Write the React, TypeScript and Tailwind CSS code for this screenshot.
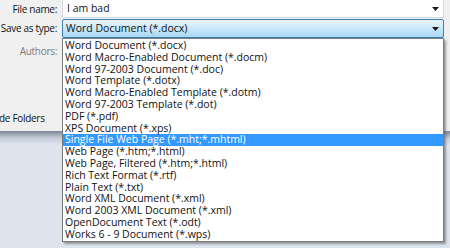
const fileTypes = [
  'Word Document (*.docx)',
  'Word Macro-Enabled Document (*.docm)',
  'Word 97-2003 Document (*.doc)',
  'Word Template (*.dotx)',
  'Word Macro-Enabled Template (*.dotm)',
  'Word 97-2003 Template (*.dot)',
  'PDF (*.pdf)',
  'XPS Document (*.xps)',
  'Single File Web Page (*.mht;*.mhtml)',
  'Web Page (*.htm;*.html)',
  'Web Page, Filtered (*.htm;*.html)',
  'Rich Text Format (*.rtf)',
  'Plain Text (*.txt)',
  'Word XML Document (*.xml)',
  'Word 2003 XML Document (*.xml)',
  'OpenDocument Text (*.odt)',
  'Works 6 - 9 Document (*.wps)',
];

const Arrow = () => (
  <svg width="7" height="4" viewBox="0 0 7 4" className="shrink-0">
    <path d="M0 0h7L3.5 4z" fill="#1a1a1a" />
  </svg>
);

const App = () => {
  return (
    <div className="relative w-[450px] h-[248px] overflow-hidden bg-[#f0f0f0] font-['Open_Sans',sans-serif] text-[10.5px] text-[#111]">
      {/* form rows */}
      <div className="flex flex-col">
        <div className="flex items-center h-[18px]">
          <div className="w-[57px] text-right whitespace-nowrap text-[10px] tracking-[-0.3px]">File name:</div>
          <div className="ml-[5px] w-[382px] h-[18px] bg-white border border-[#d5d9e0] border-t-0 flex items-center pl-[4px] pr-[4px]">
            <span className="flex-1">I am bad</span>
            <Arrow />
          </div>
        </div>
        <div className="flex items-center h-[19px] mt-[1px]">
          <div className="w-[57px] text-right whitespace-nowrap text-[10px] tracking-[-0.3px]">Save as type:</div>
          <div className="ml-[5px] w-[382px] h-[19px] border border-[#3c7fb1] rounded-[2px] bg-gradient-to-b from-[#eaf6fd] via-[#c9e8f9] to-[#a7d8f4] flex items-center pl-[3px] pr-[4px]">
            <span className="flex-1">Word Document (*.docx)</span>
            <Arrow />
          </div>
        </div>
        <div className="flex items-center h-[18px] mt-[4px]">
          <div className="w-[57px] text-right whitespace-nowrap text-[10px] tracking-[-0.3px] text-[#7a7a7a]">Authors:</div>
        </div>
        <div className="flex items-center h-[18px] mt-[49px] -ml-[1px] whitespace-nowrap text-[10px] tracking-[-0.3px]">
          <span>de Folders</span>
        </div>
      </div>

      {/* bottom panel */}
      <div className="absolute left-0 right-0 top-[131px] bottom-0 bg-[#dde4ee]">
        <div className="h-[14px] bg-gradient-to-b from-[#7d8594] via-[#c5cdd9] to-[#dde4ee]" />
      </div>

      {/* dropdown list */}
      <div className="absolute left-[62px] top-[38px] w-[382px] h-[204px] bg-white border border-[#7a7a7a] pt-[1px] shadow-[2px_2px_2px_rgba(80,80,90,0.55)]">
        {fileTypes.map((t, i) => (
          <div
            key={i}
            className={
              i === 8
                ? 'h-[11.8px] leading-[11.8px] pl-[2px] bg-[#3399ff] text-white whitespace-nowrap'
                : 'h-[11.8px] leading-[11.8px] pl-[2px] whitespace-nowrap'
            }
          >
            {t}
          </div>
        ))}
      </div>
    </div>
  );
};

export default App;
